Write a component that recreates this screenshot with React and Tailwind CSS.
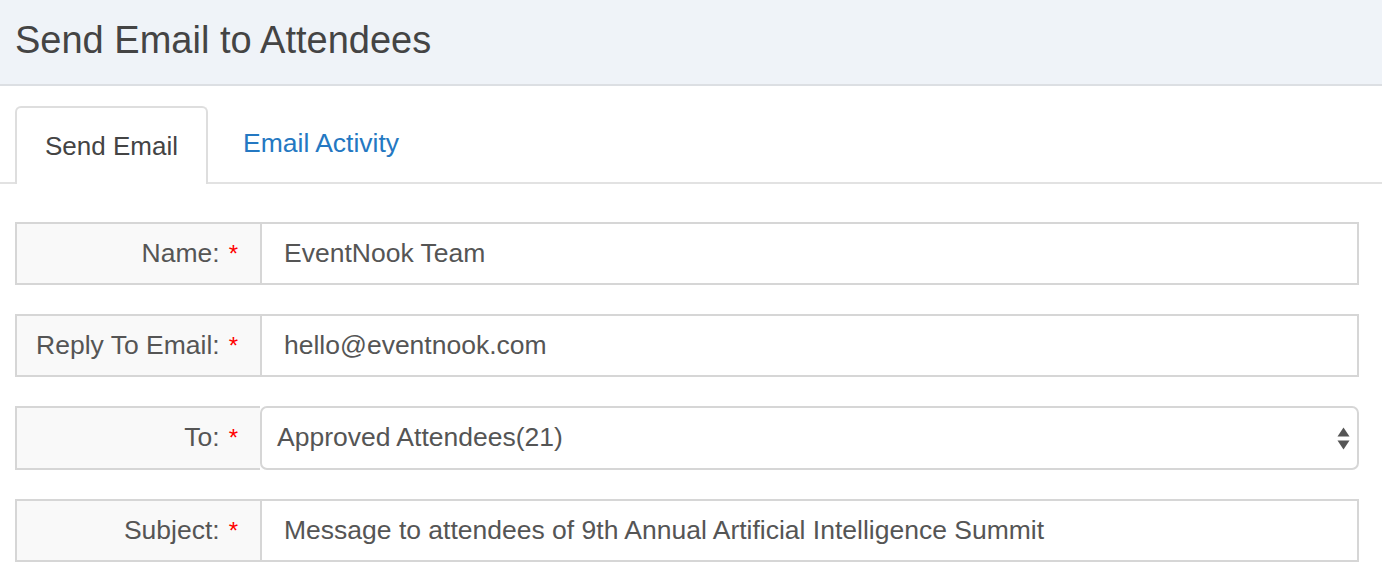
import React from 'react';

const font = { fontFamily: '"Liberation Sans", Arial, Helvetica, sans-serif' };

function Label({ children }) {
  return (
    <div className="w-[245px] shrink-0 bg-[#f9f9f9] border-2 border-r-0 border-[#d6d6d6] flex items-center justify-end pr-[22px] text-[26.5px] text-[#555]">
      {children}
      <span className="text-[#f00] ml-[9px] text-[24px]">*</span>
    </div>
  );
}

function TextRow({ label, value }) {
  return (
    <div className="flex h-[63px]">
      <Label>{label}</Label>
      <div className="flex-1 border-2 border-[#d6d6d6] flex items-center pl-[22px] text-[26.5px] text-[#555]">
        {value}
      </div>
    </div>
  );
}

export default function App() {
  return (
    <div className="w-[1382px] h-[575px] bg-white overflow-hidden" style={font}>
      <div className="h-[86px] bg-[#eff3f8] border-b-2 border-[#dcdfe3] flex items-center pl-[15px]">
        <h1 className="text-[38px] text-[#444] leading-none pb-[4px]">Send Email to Attendees</h1>
      </div>

      <div className="mt-[20px] flex border-b-2 border-[#e2e2e2] pl-[15px] h-[78px]">
        <div className="w-[193px] -mb-[2px] bg-white border-2 border-b-0 border-[#dedede] rounded-t-[6px] flex items-center justify-center text-[26px] text-[#444]">
          Send Email
        </div>
        <div className="pl-[35px] flex items-center text-[26.5px] text-[#2478c2]">Email Activity</div>
      </div>

      <div className="pl-[15px] pr-[23px] mt-[38px] flex flex-col gap-[29px]">
        <TextRow label="Name:" value="EventNook Team" />
        <TextRow label="Reply To Email:" value="hello@eventnook.com" />
        <div className="flex h-[64px]">
          <Label>To:</Label>
          <div className="flex-1 border-2 border-[#d6d6d6] rounded-[7px] flex items-center justify-between pl-[15px] pr-[7px] text-[26.5px] text-[#555]">
            <span>Approved Attendees(21)</span>
            <svg width="13" height="23" viewBox="0 0 13 23">
              <path d="M6.5 0.5 L12.5 9.5 H0.5 Z" fill="#555" />
              <path d="M6.5 22.5 L12.5 13.5 H0.5 Z" fill="#555" />
            </svg>
          </div>
        </div>
        <TextRow label="Subject:" value="Message to attendees of 9th Annual Artificial Intelligence Summit" />
      </div>
    </div>
  );
}
